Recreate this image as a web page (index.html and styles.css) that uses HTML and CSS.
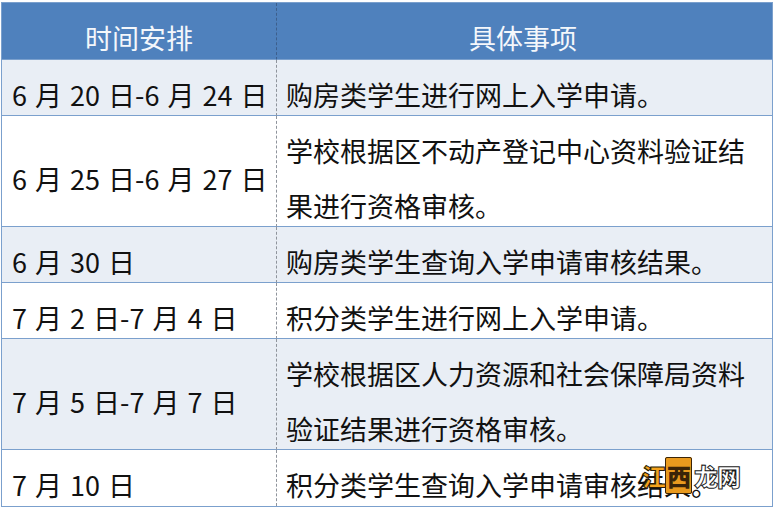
FILE: index.html
```html
<!DOCTYPE html>
<html lang="zh-CN">
<head>
<meta charset="utf-8">
<title>时间安排</title>
<link rel="stylesheet" href="styles.css">
</head>
<body>
<div class="wrap">
  <table class="schedule">
    <thead>
      <tr>
        <th class="col-time"><div class="txt">时间安排</div></th>
        <th class="col-item"><div class="txt">具体事项</div></th>
      </tr>
    </thead>
    <tbody>
      <tr class="band">
        <td class="col-time"><div class="txt">6 月 20 日-6 月 24 日</div></td>
        <td class="col-item"><div class="txt">购房类学生进行网上入学申请。</div></td>
      </tr>
      <tr>
        <td class="col-time"><div class="txt">6 月 25 日-6 月 27 日</div></td>
        <td class="col-item"><div class="txt">学校根据区不动产登记中心资料验证结果进行资格审核。</div></td>
      </tr>
      <tr class="band">
        <td class="col-time"><div class="txt">6 月 30 日</div></td>
        <td class="col-item"><div class="txt">购房类学生查询入学申请审核结果。</div></td>
      </tr>
      <tr>
        <td class="col-time"><div class="txt">7 月 2 日-7 月 4 日</div></td>
        <td class="col-item"><div class="txt">积分类学生进行网上入学申请。</div></td>
      </tr>
      <tr class="band">
        <td class="col-time"><div class="txt">7 月 5 日-7 月 7 日</div></td>
        <td class="col-item"><div class="txt">学校根据区人力资源和社会保障局资料验证结果进行资格审核。</div></td>
      </tr>
      <tr class="last">
        <td class="col-time"><div class="txt">7 月 10 日</div></td>
        <td class="col-item"><div class="txt">积分类学生查询入学申请审核结果。</div></td>
      </tr>
    </tbody>
  </table>
  <div class="watermark"><span class="wm-a">江</span><span class="wm-b">西</span><span class="wm-c">龙网</span></div>
</div>
</body>
</html>
```

FILE: styles.css
```css
html, body {
  margin: 0;
  padding: 0;
  background: #ffffff;
}

body {
  font-family: "Noto Sans CJK SC", "Noto Sans", sans-serif;
  color: #111111;
}

.wrap {
  position: relative;
  width: 777px;
  height: 508px;
  padding: 2px 0 0 1px;
  box-sizing: border-box;
}

.schedule {
  width: 772px;
  border-collapse: separate;
  border-spacing: 0;
  border: 1px solid #7ba0cd;
  table-layout: fixed;
  font-size: 27px;
}

.schedule th,
.schedule td {
  padding: 0 10px;
  line-height: 55px;
  border-bottom: 1px solid #7ba0cd;
  vertical-align: middle;
  text-align: left;
  font-weight: normal;
}

.schedule th {
  background: #4f81bd;
  color: #f4f7fb;
  text-align: center;
  line-height: 56px;
}

.schedule .col-time {
  width: 254px;
  border-right: 1px dashed #8f949c;
}

.schedule th.col-time {
  border-right: 1px dashed #3d5f8c;
}

.schedule .col-item {
  padding-left: 9px;
  padding-right: 12px;
}

.schedule td.col-time {
  padding-left: 10px;
  padding-right: 0;
  white-space: nowrap;
  word-spacing: 2px;
}

.band td {
  background: #e9eef5;
}

.last td {
  border-bottom: none;
  line-height: 56px;
}

.txt {
  padding-top: 7px;
  margin-bottom: -7px;
}

.watermark {
  position: absolute;
  left: 642px;
  top: 459px;
  font-family: "Noto Sans CJK SC", sans-serif;
  font-size: 24px;
  font-weight: 900;
  line-height: 34px;
  letter-spacing: -1px;
  white-space: nowrap;
}

.wm-a {
  color: #f5a21c;
  -webkit-text-stroke: 1px #2a1a05;
}

.wm-b {
  color: #3a2408;
  background: #e99a1e;
  border: 1px solid #3a2408;
  border-radius: 2px;
  padding: 0 1px;
}

.wm-c {
  color: #ffffff;
  -webkit-text-stroke: 1px #1a1a1a;
  margin-left: 2px;
}
```
